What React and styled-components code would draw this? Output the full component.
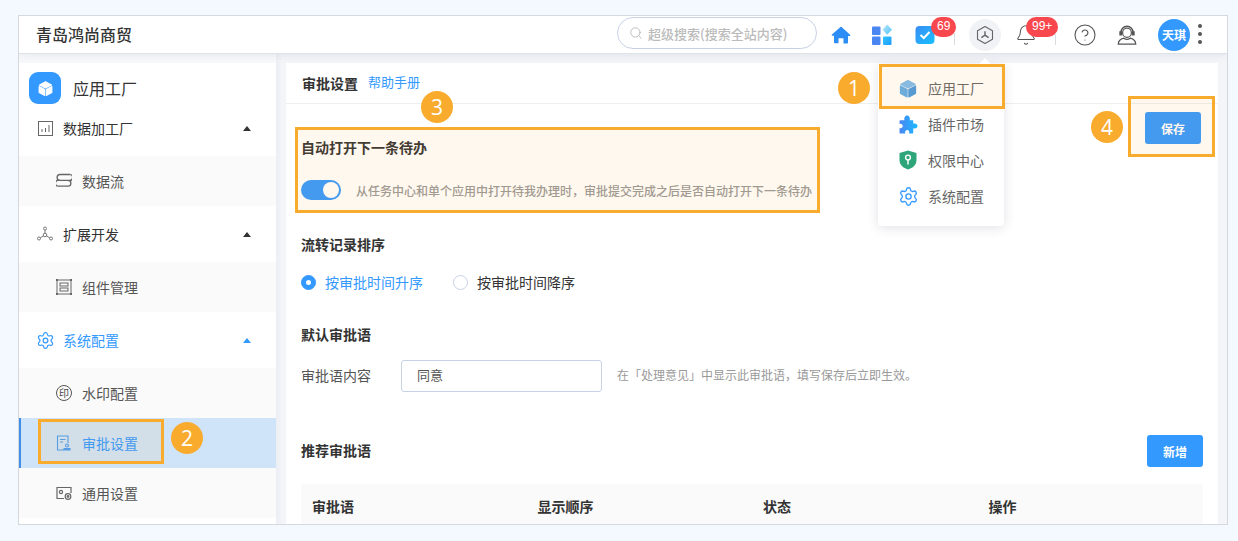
import React from "react";
import styled, { createGlobalStyle } from "styled-components";
import { Bell, CircleHelp, Search, Settings } from "lucide-react";

const GlobalStyle = createGlobalStyle`
  html, body {
    margin: 0;
    padding: 0;
    background: #f3f9fe;
    font-family: "Noto Sans CJK SC", "Liberation Sans", sans-serif;
  }
  * { box-sizing: border-box; }
`;

const Page = styled.div`
  position: relative;
  width: 1238px;
  height: 541px;
  padding: 15px 10px 16px 18px;
  overflow: hidden;
`;
const Frame = styled.div`
  height: 510px;
  border: 1px solid #d5d8dd;
  background: #f3f5f9;
  display: flex;
  flex-direction: column;
  overflow: hidden;
`;
const Header = styled.header`
  position: relative;
  z-index: 2;
  height: 38px;
  flex: none;
  display: flex;
  align-items: center;
  background: #fff;
  border-bottom: 1px solid #dfe2e7;
  box-shadow: 0 2px 8px rgba(40, 50, 80, 0.08);
  padding-left: 17px;
`;
const Company = styled.div`
  font-size: 16px;
  font-weight: 500;
  color: #333;
  line-height: 36px;
  margin-top: -2px;
`;
const SearchBox = styled.div`
  margin-left: auto;
  width: 200px;
  height: 32px;
  margin-top: -3px;
  display: flex;
  align-items: center;
  gap: 5px;
  padding-left: 11px;
  border: 1px solid #c8d2e6;
  border-radius: 16px;
  color: #bbb;
  font-size: 13px;
  font-weight: 500;
`;
const IconSlot = styled.div`
  position: relative;
  width: ${(p) => p.$w}px;
  margin-left: ${(p) => p.$ml}px;
  height: 36px;
  flex: none;
  display: flex;
  align-items: center;
  justify-content: center;
`;
const Badge = styled.span`
  position: absolute;
  top: 0;
  left: ${(p) => p.$left}px;
  height: 20px;
  padding: 0 6px;
  border-radius: 10px;
  background: #f9474e;
  color: #fff;
  font: 500 12px/19px "Liberation Sans", sans-serif;
`;
const TopDivider = styled.i`
  position: absolute;
  top: 17px;
  right: ${(p) => p.$right}px;
  width: 1px;
  height: 12px;
  background: #d8dbe0;
`;
const HexWrap = styled.div`
  width: 32px;
  height: 32px;
  border-radius: 50%;
  background: #f1f2f6;
  display: flex;
  align-items: center;
  justify-content: center;
`;
const Avatar = styled.div`
  width: 32px;
  height: 32px;
  border-radius: 50%;
  background: #3399ff;
  color: #fff;
  font-size: 12px;
  font-weight: 700;
  display: flex;
  align-items: center;
  justify-content: center;
`;
const Dots = styled.div`
  display: flex;
  flex-direction: column;
  gap: 4px;
  margin-top: -2px;
  i {
    width: 4px;
    height: 4px;
    border-radius: 50%;
    background: #555;
  }
`;

const Body = styled.div`
  flex: 1;
  min-height: 0;
  display: flex;
  gap: 10px;
  padding-right: 9px;
`;
const Sidebar = styled.aside`
  width: 257px;
  flex: none;
  background: #fff;
  border-top: 9px solid #f8f9fb;
  box-shadow: 2px 0 6px rgba(40, 50, 80, 0.05);
`;
const AppHead = styled.div`
  height: 41px;
  padding: 9px 0 0 10px;
  display: flex;
  align-items: center;
  gap: 12px;
  font-size: 16px;
  color: #333;
`;
const AppLogo = styled.div`
  width: 32px;
  height: 32px;
  border-radius: 9px;
  background: #3399ff;
  display: flex;
  align-items: center;
  justify-content: center;
`;
const GroupRow = styled.div`
  height: ${(p) => (p.$compact ? 52 : 56)}px;
  padding: ${(p) => (p.$compact ? "0 0 4px 18px" : "0 0 0 18px")};
  display: flex;
  align-items: center;
  font-size: 14px;
  color: ${(p) => (p.$active ? "#3399ff" : "#333")};
`;
const RowIcon = styled.span`
  width: 16px;
  height: 16px;
  margin-right: 10px;
  display: flex;
  align-items: center;
  justify-content: center;
`;
const Caret = styled.i`
  margin-left: auto;
  margin-right: 25px;
  width: 0;
  height: 0;
  border-left: 4px solid transparent;
  border-right: 4px solid transparent;
  border-bottom: 5px solid ${(p) => (p.$active ? "#3399ff" : "#333")};
`;
const SubRow = styled.div`
  height: 50px;
  padding-left: ${(p) => (p.$selected ? 35 : 37)}px;
  display: flex;
  align-items: center;
  gap: 10px;
  font-size: 14px;
  color: ${(p) => (p.$selected ? "#3399ff" : "#555")};
  background: ${(p) => (p.$selected ? "#cfe4f9" : "#fafafa")};
  border-left: ${(p) => (p.$selected ? "2px solid #3f8fe8" : "none")};
`;
const SealIcon = styled.span`
  width: 16px;
  height: 16px;
  border: 1px solid #555;
  border-radius: 50%;
  color: #444;
  font-size: 10px;
  line-height: 14px;
  text-align: center;
`;

const Main = styled.main`
  flex: 1;
  min-width: 0;
  margin-top: 9px;
  background: #fff;
`;
const MainHead = styled.div`
  height: 41px;
  padding: 0 16px;
  display: flex;
  align-items: center;
  gap: 10px;
  border-bottom: 1px solid #eceef1;
`;
const PageTitle = styled.h1`
  margin: 0;
  font-size: 14px;
  font-weight: 700;
  color: #333;
`;
const HelpLink = styled.a`
  font-size: 13px;
  color: #3399ff;
  margin-top: -3px;
`;
const Content = styled.div`
  position: relative;
  padding: 0 15px;
`;
const SaveRow = styled.div`
  display: flex;
  justify-content: flex-end;
  height: 0;
  padding-right: 2px;
`;
const Button = styled.button`
  width: 56px;
  height: 32px;
  flex: none;
  margin-top: ${(p) => p.$top || 0}px;
  border: 0;
  border-radius: 3px;
  background: #3399ff;
  color: #fff;
  font: 700 12px "Noto Sans CJK SC", sans-serif;
`;
const SectionTitle = styled.h2`
  margin: ${(p) => p.$top}px 0 0;
  font-size: 14px;
  line-height: 20px;
  font-weight: 700;
  color: #333;
`;
const SwitchRow = styled.div`
  margin-top: 23px;
  display: flex;
  align-items: center;
  gap: 15px;
  font-size: 12px;
  font-weight: 500;
  color: #999;
`;
const Toggle = styled.span`
  width: 40px;
  height: 20px;
  border-radius: 10px;
  background: #3399ff;
  display: flex;
  align-items: center;
  justify-content: flex-end;
  padding-right: 2px;
  i {
    width: 16px;
    height: 16px;
    border-radius: 50%;
    background: #fff;
  }
`;
const RadioRow = styled.div`
  margin-top: 18px;
  display: flex;
  font-size: 14px;
  line-height: 20px;
`;
const RadioItem = styled.label`
  display: flex;
  align-items: center;
  gap: 9px;
  margin-right: 30px;
  color: ${(p) => (p.$on ? "#3399ff" : "#333")};
`;
const RadioDot = styled.i`
  width: 15px;
  height: 15px;
  border-radius: 50%;
  background: ${(p) => (p.$on ? "#3399ff" : "#fff")};
  border: 1px solid ${(p) => (p.$on ? "#3399ff" : "#c8d2e6")};
  display: flex;
  align-items: center;
  justify-content: center;
  &::after {
    content: "";
    width: 5px;
    height: 5px;
    border-radius: 50%;
    background: ${(p) => (p.$on ? "#fff" : "transparent")};
  }
`;
const FieldRow = styled.div`
  margin-top: 16px;
  display: flex;
  align-items: center;
  font-size: 14px;
  color: #555;
`;
const FieldLabel = styled.span`
  margin-top: -2px;
`;
const TextBox = styled.div`
  width: 201px;
  height: 32px;
  margin: 0 15px 0 30px;
  padding-left: 15px;
  border: 1px solid #c8d2e6;
  border-radius: 3px;
  line-height: 28px;
  font-size: 13px;
`;
const Hint = styled.span`
  margin-top: -3px;
  font-size: 12px;
  color: #999;
`;
const ListHead = styled.div`
  margin-top: 43px;
  display: flex;
  align-items: center;
  justify-content: space-between;
`;
const Table = styled.div`
  margin-top: 17px;
  display: grid;
  grid-template-columns: repeat(4, 225.5px);
  height: 46px;
  padding: 0 0 2px 11px;
  align-items: center;
  background: #fafafa;
  font-size: 14px;
  font-weight: 700;
  color: #333;
`;

const Menu = styled.div`
  position: absolute;
  z-index: 3;
  left: 878px;
  top: 64px;
  width: 126px;
  height: 162px;
  background: #fff;
  border-radius: 4px;
  box-shadow: 0 2px 12px rgba(40, 50, 80, 0.14);
  &::before {
    content: "";
    position: absolute;
    left: 101px;
    top: -6px;
    border-left: 6px solid transparent;
    border-right: 6px solid transparent;
    border-bottom: 6px solid #fff;
  }
`;
const MenuItem = styled.div`
  height: 36px;
  display: flex;
  align-items: center;
  gap: 10px;
  padding-left: 20px;
  font-size: 14px;
  color: #666;
  &:first-child {
    height: 42px;
    padding-top: 6px;
  }
`;
const MenuIcon = styled.span`
  width: 20px;
  height: 20px;
  display: flex;
  align-items: center;
  justify-content: center;
`;
const Highlight = styled.div`
  position: absolute;
  z-index: 4;
  left: ${(p) => p.$x}px;
  top: ${(p) => p.$y}px;
  width: ${(p) => p.$w}px;
  height: ${(p) => p.$h}px;
  border: 3px solid #f9ab2e;
  background: rgba(250, 170, 50, 0.08);
  pointer-events: none;
`;
const Marker = styled.span`
  position: absolute;
  z-index: 5;
  left: ${(p) => p.$x}px;
  top: ${(p) => p.$y}px;
  width: 32px;
  height: 32px;
  border-radius: 50%;
  background: #f9ab2e;
  color: #fff;
  font: 400 21px/32px "Open Sans", "Liberation Sans", sans-serif;
  text-align: center;
`;

const Cube = ({ size = 18, top = "#fff", left = "#fff", right = "#fff" }) => (
  <svg width={size} height={size} viewBox="0 0 24 24" strokeLinejoin="round" strokeWidth="1.5">
    <path d="M12 2.500 20.500 7 12 11.300 3.500 7z" fill={top} stroke={top} />
    <path d="M3 9.200 10.900 13.300V22L3 17.800z" fill={left} stroke={left} />
    <path d="M21 9.200 13.100 13.300V22L21 17.800z" fill={right} stroke={right} />
  </svg>
);
const HomeIcon = () => (
  <svg width="20" height="20" viewBox="0 0 24 24" fill="#2b8df5">
    <path d="M12 2.500c.5 0 .9.2 1.300.5l9.600 8.700c.6.6.2 1.600-.7 1.600H20.400v8c0 .6-.4 1-1 1H15v-6.500H9V22H4.600c-.6 0-1-.4-1-1v-8H1.800c-.9 0-1.300-1-.7-1.600L10.700 3c.4-.3.8-.5 1.300-.5z" />
  </svg>
);
const AppsIcon = () => (
  <svg width="22" height="22" viewBox="0 0 22 22">
    <defs>
      <linearGradient id="appsTile" x1="0" y1="0" x2="1" y2="1">
        <stop offset="0" stopColor="#35c5ff" />
        <stop offset="1" stopColor="#1a9bff" />
      </linearGradient>
      <linearGradient id="appsDiamond" x1="0" y1="0" x2="1" y2="1">
        <stop offset="0" stopColor="#b5e6fb" />
        <stop offset="1" stopColor="#55c4f5" />
      </linearGradient>
    </defs>
    <rect x="1" y="2.500" width="8.500" height="8.500" rx="1" fill="#4a86f2" />
    <rect x="1" y="12.500" width="8.500" height="8.500" rx="1" fill="#4a86f2" />
    <rect x="12" y="12.500" width="8.500" height="8.500" rx="1" fill="url(#appsTile)" />
    <path d="M16.200 0.500 21 5.700 16.200 10.800 11.600 5.700z" fill="url(#appsDiamond)" />
  </svg>
);
const TaskIcon = () => (
  <svg width="20" height="20" viewBox="0 0 20 20">
    <defs>
      <linearGradient id="taskFill" x1="0" y1="0" x2="1" y2="1">
        <stop offset="0" stopColor="#3a8cf5" />
        <stop offset="1" stopColor="#18c0ff" />
      </linearGradient>
    </defs>
    <rect x="0.500" y="1" width="19" height="18" rx="4" fill="url(#taskFill)" />
    <path d="M5.500 10 8.800 13 14.500 7" fill="none" stroke="#fff" strokeWidth="2" />
  </svg>
);
const HexIcon = () => (
  <svg width="20" height="20" viewBox="0 0 20 20" fill="none" stroke="#666" strokeWidth="1.100">
    <path d="M10 1.500 17.500 5.700V14.300L10 18.500 2.500 14.300V5.700z" strokeLinejoin="round" />
    <path d="M10 6.200V10.200L6.400 12.600M10 10.200 13.600 12.600" strokeWidth="1.400" />
  </svg>
);
const HeadsetIcon = () => (
  <svg width="24" height="24" viewBox="0 0 24 24" fill="none" stroke="#555" strokeWidth="1.300">
    <ellipse cx="12" cy="9.500" rx="4.800" ry="5" />
    <path d="M5.500 10V9a6.500 6.500 0 0 1 13 0v1" strokeWidth="1.600" />
    <path d="M4.300 8.500h1.800v3.500H4.300zM17.900 8.500h1.800v3.500h-1.800z" fill="#555" />
    <path d="M2.500 22c0-3.500 2-5.500 6-6.500 2 1.500 5 1.500 7 0 4 1 6 3 6 6.500z" strokeWidth="1.400" />
  </svg>
);
const BarsIcon = () => (
  <svg width="15" height="15" viewBox="0 0 15 15" fill="none" stroke="#666">
    <rect x="0.500" y="0.500" width="14" height="14" />
    <path d="M4 11V8M7.500 11V7M11 11V4" />
  </svg>
);
const FlowIcon = () => (
  <svg width="16" height="16" viewBox="0 0 16 16" fill="none" stroke="#666" strokeWidth="1.300">
    <path d="M14.500 1.500H4a2.900 2.900 0 0 0 0 5.800h8a2.900 2.900 0 0 1 0 5.800H1.500" />
    <path d="M14.500 1.500a2.900 2.900 0 0 1-2 5.800M1.500 13.100a2.900 2.900 0 0 1 2-5.800" />
  </svg>
);
const NodesIcon = () => (
  <svg width="16" height="16" viewBox="0 0 16 16" fill="none" stroke="#777">
    <circle cx="8" cy="2.500" r="1.500" />
    <circle cx="2" cy="12.500" r="1.500" />
    <circle cx="14" cy="12.500" r="1.500" />
    <circle cx="8" cy="9" r="1.800" />
    <path d="M8 4V7.200M3.300 11.700 6.500 10M12.700 11.700 9.500 10" />
  </svg>
);
const WidgetIcon = () => (
  <svg width="16" height="16" viewBox="0 0 16 16" fill="none" stroke="#666">
    <rect x="1" y="1" width="14" height="14" />
    <rect x="4" y="4" width="8" height="3" />
    <rect x="4" y="9" width="8" height="3" />
    <path d="M0 0h2v2H0zM14 0h2v2h-2zM0 14h2v2H0zM14 14h2v2h-2z" fill="#666" stroke="none" />
  </svg>
);
const ApproveIcon = () => (
  <svg width="16" height="16" viewBox="0 0 16 16" fill="none" stroke="#4a9df0" strokeWidth="1.100">
    <path d="M8 15H1.500V1h10.500v7" />
    <path d="M4 4.500h5.500M4 7h3" />
    <circle cx="11" cy="10.500" r="1.500" />
    <path d="M8 15v-1.500h6V15z" fill="#4a9df0" />
  </svg>
);
const GeneralIcon = () => (
  <svg width="16" height="16" viewBox="0 0 16 16" fill="none" stroke="#666" strokeWidth="1.200">
    <path d="M8 13.500H1V2.500h14V8" />
    <circle cx="5" cy="7" r="1.600" />
    <circle cx="12" cy="11.500" r="2.800" />
    <circle cx="12" cy="11.500" r=".8" />
  </svg>
);
const PuzzleIcon = () => (
  <svg width="19" height="19" viewBox="0 0 18 18">
    <defs>
      <linearGradient id="puzzleFill" x1="0" y1="0" x2="1" y2="0">
        <stop offset="0" stopColor="#4a86f2" />
        <stop offset="1" stopColor="#1ab9ff" />
      </linearGradient>
    </defs>
    <path
      fill="url(#puzzleFill)"
      d="M1.500 5H5.200C4.600 2.800 5.600.5 7.700.5s3 2.300 2.500 4.500H13.500V8.200c2-.6 4 .2 4 2.200s-2 2.800-4 2.200V16.500c0 .6-.4 1-1 1H9.600c.5-1.800-.3-3.200-1.800-3.200S5.400 15.700 5.900 17.500H1.500c-.6 0-1-.4-1-1V12.500c1.800.5 3-.5 3-2s-1.200-2.500-3-2V6c0-.6.4-1 1-1z"
    />
  </svg>
);
const ShieldIcon = () => (
  <svg width="18" height="20" viewBox="0 0 18 20">
    <path d="M9 .5 17.500 3V10c0 5-3.700 8-8.500 9.500C4.200 18 .5 15 .5 10V3z" fill="#2fa67a" />
    <circle cx="9" cy="7.500" r="2.400" fill="none" stroke="#fff" strokeWidth="1.400" />
    <path d="M9 10v4.500" stroke="#fff" strokeWidth="1.500" />
  </svg>
);

const groups = [
  {
    label: "数据加工厂",
    compact: true,
    icon: <BarsIcon />,
    subs: [{ label: "数据流", icon: <FlowIcon /> }],
  },
  {
    label: "扩展开发",
    icon: <NodesIcon />,
    subs: [{ label: "组件管理", icon: <WidgetIcon /> }],
  },
  {
    label: "系统配置",
    active: true,
    icon: <Settings size={19} strokeWidth={1.5} color="#3399ff" style={{ flex: "none" }} />,
    subs: [
      { label: "水印配置", icon: <SealIcon>印</SealIcon> },
      { label: "审批设置", icon: <ApproveIcon />, selected: true },
      { label: "通用设置", icon: <GeneralIcon /> },
    ],
  },
];

const menuItems = [
  { label: "应用工厂", icon: <Cube size={21} top="#7fbcef" left="#62ade9" right="#4a9be0" /> },
  { label: "插件市场", icon: <PuzzleIcon /> },
  { label: "权限中心", icon: <ShieldIcon /> },
  { label: "系统配置", icon: <Settings size={21} strokeWidth={1.5} color="#3399ff" style={{ flex: "none" }} /> },
];

function TopBar() {
  return (
    <Header>
      <Company>青岛鸿尚商贸</Company>
      <SearchBox>
        <Search size={14} strokeWidth={1.3} color="#aaa" />
        超级搜索(搜索全站内容)
      </SearchBox>
      <IconSlot $w={20} $ml={14}><HomeIcon /></IconSlot>
      <IconSlot $w={22} $ml={20}><AppsIcon /></IconSlot>
      <IconSlot $w={20} $ml={22}>
        <TaskIcon />
        <Badge $left={16}>69</Badge>
      </IconSlot>
      <TopDivider $right={272} />
      <IconSlot $w={32} $ml={34}><HexWrap><HexIcon /></HexWrap></IconSlot>
      <IconSlot $w={20} $ml={15}>
        <Bell size={22} strokeWidth={1.1} color="#555" style={{ flex: "none" }} />
        <Badge $left={10}>99+</Badge>
      </IconSlot>
      <TopDivider $right={171} />
      <IconSlot $w={22} $ml={38}><CircleHelp size={24} strokeWidth={1.1} color="#555" style={{ flex: "none" }} /></IconSlot>
      <IconSlot $w={22} $ml={20}><HeadsetIcon /></IconSlot>
      <IconSlot $w={32} $ml={20}><Avatar>天琪</Avatar></IconSlot>
      <IconSlot $w={4} $ml={8}><Dots><i /><i /><i /></Dots></IconSlot>
      <IconSlot $w={0} $ml={25} />
    </Header>
  );
}

function SideNav() {
  return (
    <Sidebar>
      <AppHead>
        <AppLogo><Cube size={17} /></AppLogo>
        应用工厂
      </AppHead>
      {groups.map((group) => (
        <div key={group.label}>
          <GroupRow $compact={group.compact} $active={group.active}>
            <RowIcon>{group.icon}</RowIcon>
            {group.label}
            <Caret $active={group.active} />
          </GroupRow>
          {group.subs.map((sub) => (
            <SubRow key={sub.label} $selected={sub.selected}>
              {sub.icon}
              {sub.label}
            </SubRow>
          ))}
        </div>
      ))}
    </Sidebar>
  );
}

function SettingsForm() {
  return (
    <Main>
      <MainHead>
        <PageTitle>审批设置</PageTitle>
        <HelpLink>帮助手册</HelpLink>
      </MainHead>
      <Content>
        <SaveRow><Button $top={8}>保存</Button></SaveRow>
        <SectionTitle $top={33}>自动打开下一条待办</SectionTitle>
        <SwitchRow>
          <Toggle><i /></Toggle>
          从任务中心和单个应用中打开待我办理时，审批提交完成之后是否自动打开下一条待办
        </SwitchRow>
        <SectionTitle $top={34}>流转记录排序</SectionTitle>
        <RadioRow>
          <RadioItem $on><RadioDot $on />按审批时间升序</RadioItem>
          <RadioItem><RadioDot />按审批时间降序</RadioItem>
        </RadioRow>
        <SectionTitle $top={32}>默认审批语</SectionTitle>
        <FieldRow>
          <FieldLabel>审批语内容</FieldLabel>
          <TextBox>同意</TextBox>
          <Hint>在「处理意见」中显示此审批语，填写保存后立即生效。</Hint>
        </FieldRow>
        <ListHead>
          <SectionTitle $top={-2}>推荐审批语</SectionTitle>
          <Button>新增</Button>
        </ListHead>
        <Table>
          <span>审批语</span>
          <span>显示顺序</span>
          <span>状态</span>
          <span>操作</span>
        </Table>
      </Content>
    </Main>
  );
}

export default function App() {
  return (
    <Page>
      <GlobalStyle />
      <Frame>
        <TopBar />
        <Body>
          <SideNav />
          <SettingsForm />
        </Body>
      </Frame>
      <Menu>
        {menuItems.map((item) => (
          <MenuItem key={item.label}>
            <MenuIcon>{item.icon}</MenuIcon>
            {item.label}
          </MenuItem>
        ))}
      </Menu>
      <Highlight $x={879} $y={64} $w={126} $h={45} />
      <Highlight $x={38} $y={419} $w={126} $h={45} />
      <Highlight $x={295} $y={127} $w={525} $h={86} />
      <Highlight $x={1128} $y={96} $w={87} $h={61} />
      <Marker $x={838} $y={72}>1</Marker>
      <Marker $x={171} $y={422}>2</Marker>
      <Marker $x={421} $y={91}>3</Marker>
      <Marker $x={1091} $y={111}>4</Marker>
    </Page>
  );
}
